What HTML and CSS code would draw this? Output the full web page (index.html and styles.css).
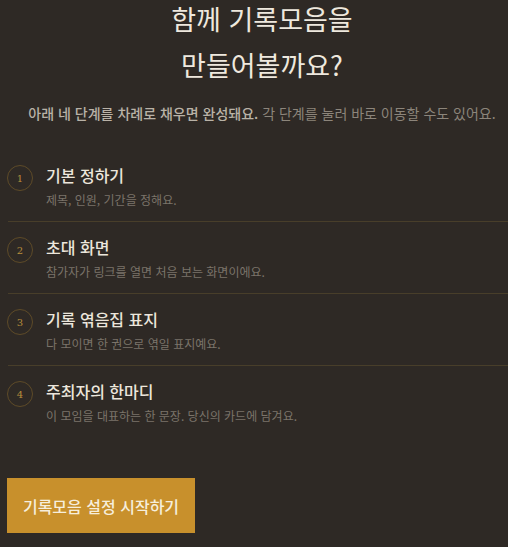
FILE: index.html
```html
<!DOCTYPE html>
<html lang="ko">
<head>
<meta charset="utf-8">
<link rel="stylesheet" href="styles.css">
</head>
<body>
<div class="page">
  <h1 class="title">함께 기록모음을<br>만들어볼까요?</h1>
  <p class="lead"><span class="lead-strong">아래 네 단계를 차례로 채우면 완성돼요.</span> 각 단계를 눌러 바로 이동할 수도 있어요.</p>
  <ol class="steps">
    <li class="step">
      <span class="num">1</span>
      <div class="step-text">
        <div class="step-title">기본 정하기</div>
        <div class="step-desc">제목, 인원, 기간을 정해요.</div>
      </div>
    </li>
    <li class="step">
      <span class="num">2</span>
      <div class="step-text">
        <div class="step-title">초대 화면</div>
        <div class="step-desc">참가자가 링크를 열면 처음 보는 화면이에요.</div>
      </div>
    </li>
    <li class="step">
      <span class="num">3</span>
      <div class="step-text">
        <div class="step-title">기록 엮음집 표지</div>
        <div class="step-desc">다 모이면 한 권으로 엮일 표지예요.</div>
      </div>
    </li>
    <li class="step">
      <span class="num">4</span>
      <div class="step-text">
        <div class="step-title">주최자의 한마디</div>
        <div class="step-desc">이 모임을 대표하는 한 문장. 당신의 카드에 담겨요.</div>
      </div>
    </li>
  </ol>
  <button class="start">기록모음 설정 시작하기</button>
</div>
</body>
</html>
```
FILE: styles.css
```css
html, body {
  margin: 0;
  padding: 0;
  background: #2e2925;
  overflow: hidden;
}
body {
  font-family: "Noto Sans CJK KR", "Noto Sans", sans-serif;
  color: #ece6dc;
}
.page {
  width: 508px;
  padding-left: 8px;
  box-sizing: content-box;
}
.title {
  margin: -4px 0 0;
  text-align: center;
  font-size: 27px;
  line-height: 46px;
  font-weight: 400;
  color: #eee8de;
}
.lead {
  margin: 15px 0 0;
  text-align: center;
  font-size: 14px;
  line-height: 20px;
  color: #8c857b;
}
.lead-strong {
  color: #b9b2a7;
  font-weight: 500;
}
.steps {
  list-style: none;
  margin: 27px 0 0;
  padding: 0;
}
.step {
  display: flex;
  align-items: flex-start;
  gap: 13px;
  padding: 14px 0 12px;
  border-bottom: 1px solid #483e2a;
}
.step:last-child {
  border-bottom: none;
}
.num {
  flex: none;
  width: 24px;
  height: 24px;
  margin-left: -1px;
  margin-top: 1px;
  border: 1px solid #5e4b28;
  border-radius: 50%;
  display: flex;
  align-items: center;
  justify-content: center;
  font-family: "DejaVu Serif", "Liberation Serif", serif;
  font-size: 10px;
  color: #b88d3c;
}
.step-title {
  font-size: 16px;
  line-height: 22px;
  font-weight: 500;
  color: #ece6dc;
}
.step-desc {
  margin-top: 5px;
  font-size: 12px;
  line-height: 18px;
  color: #7b746a;
}
.start {
  display: block;
  margin: 41px 0 0 -1px;
  width: 188px;
  height: 55px;
  border: none;
  background: #c8902c;
  color: #f6eedc;
  font-family: "Noto Sans CJK KR", "Noto Sans", sans-serif;
  font-size: 16px;
  font-weight: 500;
  cursor: pointer;
}
```
